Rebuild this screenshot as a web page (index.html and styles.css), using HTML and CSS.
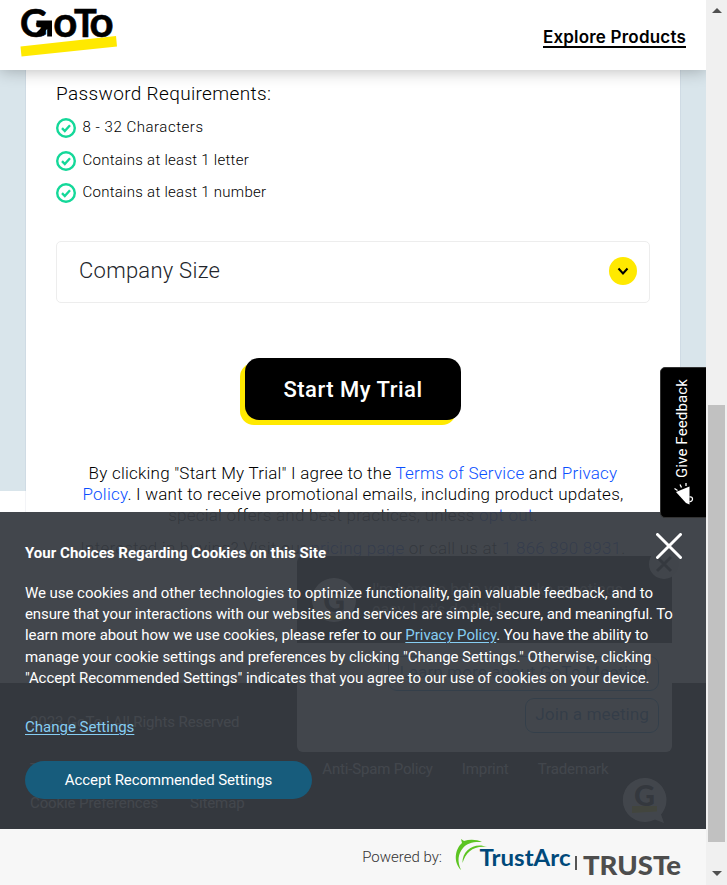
FILE: index.html
```html
<!DOCTYPE html>
<html lang="en">
<head>
<meta charset="utf-8">
<title>GoTo - Start My Trial</title>
<link rel="stylesheet" href="styles.css">
</head>
<body>
<div class="window">
  <div class="page">
    <header class="header">
      <svg class="logo" width="100" height="52" viewBox="0 0 100 52" role="img" aria-label="GoTo">
        <path d="M0.5 41.5 96 31 97 41.5 1.5 51.500z" fill="#ffe900"/>
        <text class="logo-text"><tspan x="0" y="31.500" font-size="38" textLength="32">G</tspan><tspan x="33.300" y="31.500" font-size="42">o</tspan><tspan x="54" y="31.500" font-size="38">T</tspan><tspan x="69.500" y="31.500" font-size="42">o</tspan></text>
        <path d="M16.500 15.500h15.500v16h-4.800v-7.500l-7.500 7-3.200-3.500 7.200-7H16.500z" fill="#000"/>
      </svg>
      <a class="explore">Explore Products</a>
    </header>

    <main class="stage">
      <section class="card">
        <h2 class="pw-title">Password Requirements:</h2>
        <ul class="rules">
          <li><svg width="20" height="20" viewBox="0 0 20 20"><circle cx="10" cy="10" r="8.800"/><path d="M6 10.200 8.800 13 14 7.300"/></svg><span class="rule-a">8 - 32 Characters</span></li>
          <li><svg width="20" height="20" viewBox="0 0 20 20"><circle cx="10" cy="10" r="8.800"/><path d="M6 10.200 8.800 13 14 7.300"/></svg><span>Contains at least 1 letter</span></li>
          <li><svg width="20" height="20" viewBox="0 0 20 20"><circle cx="10" cy="10" r="8.800"/><path d="M6 10.200 8.800 13 14 7.300"/></svg><span>Contains at least 1 number</span></li>
        </ul>
        <div class="select">
          <span>Company Size</span>
          <svg width="28" height="28" viewBox="0 0 28 28"><circle cx="14" cy="14" r="14" fill="#ffe900"/><path d="M9.500 11.500 14 16.500 18.500 11.500" fill="none" stroke="#000" stroke-width="2"/></svg>
        </div>
        <button class="trial">Start My Trial</button>
        <p class="terms">By clicking "Start My Trial" I agree to the <a>Terms of Service</a> and <a>Privacy<br>Policy</a>. I want to receive promotional emails, including product updates,<br>special offers and best practices, unless <a>opt out</a>.</p>
        <p class="terms buy">Interested in buying? Visit our <a>pricing page</a> or call us at <a>1 866 890 8931</a>.</p>
      </section>
    </main>

    <footer class="footer">
      <p>2023 GoTo | All Rights Reserved</p>
      <nav class="links"><a>Terms and Conditions</a><a class="anti">Anti-Spam Policy</a><a>Imprint</a><a>Trademark</a></nav>
      <nav class="links second"><a>Cookie Preferences</a><a>Sitemap</a></nav>
    </footer>

    <aside class="chat">
      <div class="chat-head">
        <span class="avatar">G</span>
        <p>I'm here to help you make meetings<br>easy. Let's do this!</p>
      </div>
      <div class="chat-body">
        <span class="chip wide">Learn more about GoTo Meeting</span>
        <span class="chip">Join a meeting</span>
      </div>
      <svg class="chat-close" width="30" height="30" viewBox="0 0 30 30"><circle cx="15" cy="15" r="15" fill="#e8e8e8"/><path d="M8 8 22 22M22 8 8 22" stroke="#222" stroke-width="3"/></svg>
    </aside>
    <svg class="bubble" width="44" height="46" viewBox="0 0 44 46"><path d="M22 0a22 22 0 1 0 10 41.500L41 45 38 36.500A22 22 0 0 0 22 0z" fill="#fff"/><path d="M9 28h25v5.500L9 35z" fill="#ffe900"/><text x="11" y="28" class="bubble-g">G</text></svg>

    <section class="banner">
      <div class="notice">
        <h3>Your Choices Regarding Cookies on this Site</h3>
        <p>We use cookies and other technologies to optimize functionality, gain valuable feedback, and to<br><span class="l2">ensure that your interactions with our websites and services are simple, secure, and meaningful. To</span><br>learn more about how we use cookies, please refer to our <a>Privacy Policy</a>. You have the ability to<br>manage your cookie settings and preferences by clicking "Change Settings." Otherwise, clicking<br>"Accept Recommended Settings" indicates that you agree to our use of cookies on your device.</p>
        <a class="change">Change Settings</a>
        <button class="accept">Accept Recommended Settings</button>
        <svg class="dismiss" width="26" height="26" viewBox="0 0 26 26"><path d="M1.500 1.500 24.500 24.500M24.500 1.500 1.500 24.500" stroke="#fff" stroke-width="3" stroke-linecap="round"/></svg>
      </div>
      <div class="powered">
        <span>Powered by:</span>
        <svg width="228" height="44" viewBox="0 0 228 44" role="img" aria-label="TrustArc TRUSTe">
          <path d="M7 2 10 4C16 2 23 2.500 28 5 19 4.500 13 6 9 11 4 17 3 24 7 33-1 25 1 12 8 6z" fill="#5cc422"/>
          <path d="M33 10C22 5 8 12 8.500 26 12 15 19 8.500 33 10z" fill="#5cc422"/>
          <text x="25.500" y="29" class="tarc" textLength="91" lengthAdjust="spacingAndGlyphs">TrustArc</text>
          <path d="M122 19v14" stroke="#555" stroke-width="2"/>
          <text x="129" y="37.500" class="truste" textLength="98" lengthAdjust="spacingAndGlyphs">TRUSTe</text>
        </svg>
      </div>
    </section>

    <div class="feedback">
      <span>Give Feedback</span>
      <svg width="20" height="22" viewBox="0 0 20 22"><path d="M2 9 15.500 3.500V21.500L12 20z" fill="#fff"/><path d="M15.500 14c4-1 4 5 0 4.500M.5 5.500l3 2M6 1.500l1.500 3M12 0v3" fill="none" stroke="#fff" stroke-width="1.300"/></svg>
    </div>
  </div>
  <div class="scrollbar"><i class="up"></i><i class="thumb"></i><i class="down"></i></div>
</div>
</body>
</html>
```
FILE: styles.css
```css
* { box-sizing: border-box; }
body { margin: 0; font-family: Roboto, "Liberation Sans", sans-serif; font-weight: 300; color: #000; }
h2, h3, p, ul { margin: 0; padding: 0; }
button { border: 0; font-family: inherit; }

.window { display: flex; width: 727px; height: 885px; overflow: hidden; }
.page { position: relative; width: 706px; height: 885px; overflow: hidden; background: #fff; }

.header { position: relative; height: 70px; padding: 5px 20px 0 20px; display: flex; justify-content: space-between; background: #fff; box-shadow: 0 0 16px rgba(0, 0, 0, .3); z-index: 1; }
.logo { overflow: visible; }
.logo-text { font-family: Lato, sans-serif; font-weight: 700; stroke: #000; stroke-width: .6px; }
.explore { margin-top: 22px; height: 21px; font: 600 17px/20px Inter, sans-serif; letter-spacing: .2px; border-bottom: 2px solid #000; white-space: nowrap; }

.stage { height: 613px; padding: 0 26px; background: linear-gradient(#d9e5eb 421px, #fff 421px); }
.card { height: 100%; padding: 12px 30px 0; background: #fff; box-shadow: 0 0 1px rgba(80, 100, 140, .4); }
.pw-title { font-size: 19px; line-height: 24px; font-weight: 300; letter-spacing: .35px; }
.rules { list-style: none; margin-top: 5px; display: flex; flex-direction: column; }
.rules li { display: flex; align-items: center; gap: 6.5px; height: 32.5px; font-size: 15px; letter-spacing: .27px; }
.rules li:first-child { height: 33px; }
.rules li:last-child { height: 32px; }
.rules svg { fill: none; stroke: #14d899; stroke-width: 2.4; margin-top: 1px; }
.rules li span { margin-top: -1px; }
.rules li .rule-a { letter-spacing: .53px; }
.select { margin-top: 32.5px; height: 62px; padding: 0 12px 0 22px; border: 1px solid #ededed; border-radius: 5px; display: flex; align-items: center; justify-content: space-between; font-size: 22px; letter-spacing: .26px; color: #22252b; }
.select span { margin-top: -4px; }
.select svg { margin-top: -2px; }
.trial { display: block; width: 216px; height: 62px; margin: 55px 0 0 189px; border-radius: 14px; background: #000; box-shadow: -5px 5px 0 #ffe900; color: #fff; font-size: 22px; font-weight: 500; letter-spacing: .5px; }
.terms { margin-top: 43px; font-size: 17px; line-height: 21.2px; letter-spacing: .23px; text-align: center; white-space: nowrap; }
.terms a { color: #0a50ff; }
.terms.buy { margin-top: 11px; }

.footer { height: 202px; padding: 29px 30px; background: #000; color: #fff; font-size: 15px; font-weight: 400; line-height: 20px; letter-spacing: -.1px; }
.links { display: flex; gap: 29px; margin-top: 27px; white-space: nowrap; }
.links .anti { margin-left: 119px; letter-spacing: -.18px; }
.links.second { margin-top: 14px; gap: 32px; }

.chat { position: absolute; left: 297px; top: 556px; width: 375px; height: 196px; border-radius: 6px; background: #fff; }
.chat-head { height: 87px; padding: 0 15px; display: flex; align-items: center; gap: 16px; background: #000; color: #fff; font-size: 16px; line-height: 20px; font-weight: 400; border-radius: 6px 6px 0 0; }
.chat-head p { white-space: nowrap; color: #aaa; }
.avatar { width: 44px; height: 44px; border-radius: 50%; background: #fff; color: #000; font: 900 30px/44px Lato, sans-serif; text-align: center; text-decoration: underline 5px #ffe900; }
.chat-body { padding: 13px 13px 0; display: flex; flex-direction: column; align-items: flex-end; gap: 7px; }
.chip { height: 35px; padding: 0 9px; border: 1px solid #0a84d8; border-radius: 9px; color: #0a64b8; font-size: 17.3px; line-height: 31px; white-space: nowrap; font-weight: 400; }
.chip.wide { width: 271px; text-align: center; }
.chat-close { position: absolute; left: 352px; top: -7px; }
.bubble { position: absolute; left: 623px; top: 778px; overflow: visible; }
.bubble-g { font: 900 29px Lato, sans-serif; }

.banner { position: absolute; left: 0; bottom: 0; width: 706px; height: 373px; display: flex; flex-direction: column; font-weight: 400; font-size: 15px; }
.notice { position: relative; height: 317px; padding: 31px 25px 0; background: rgba(55, 59, 66, .945); color: #fff; white-space: nowrap; }
.notice h3 { font-size: 15px; line-height: 20px; font-weight: 700; letter-spacing: .03px; }
.notice p { margin-top: 20px; line-height: 21.2px; letter-spacing: -.05px; }
.notice .l2 { letter-spacing: -.1px; }
.notice a { color: #86cdf2; text-decoration: underline; text-underline-offset: 2px; }
.notice .change { display: block; width: max-content; margin-top: 28px; line-height: 20px; }
.accept { display: block; width: 287px; height: 38px; margin-top: 24px; border-radius: 19px; background: #175c7c; color: #fff; font-size: 15px; letter-spacing: -.1px; }
.dismiss { position: absolute; left: 655.5px; top: 20.5px; }
.powered { height: 56px; padding: 0 24px 0 0; display: flex; justify-content: flex-end; gap: 12px; background: #f7f7f7; color: #333; line-height: 56px; font-weight: 300; }
.powered svg { margin-top: 8px; overflow: visible; }
.tarc { font: 700 23px Lato, sans-serif; fill: #00497a; }
.truste { font: 900 26px Lato, sans-serif; fill: #4d4d4d; }

.feedback { position: absolute; left: 660px; top: 367px; width: 47px; height: 151px; padding: 10px 0 0 10px; border: 1px solid #333; border-radius: 5px 0 0 5px; background: #000; color: #fff; display: flex; flex-direction: column; gap: 5px; font-size: 15px; font-weight: 400; letter-spacing: .13px; }
.feedback span { writing-mode: vertical-rl; transform: rotate(180deg); width: 22px; height: 100px; line-height: 22px; white-space: nowrap; }
.feedback svg { margin-left: 3px; }

.scrollbar { width: 21px; padding: 8px 2px 8px; display: flex; flex-direction: column; align-items: center; background: #f0f0f0; }
.up { border: 5px solid transparent; border-top: 0; border-bottom-color: #505050; }
.thumb { width: 17px; height: 437px; margin-top: 392px; background: #c1c1c1; }
.down { margin-top: 29px; border: 5px solid transparent; border-bottom: 0; border-top-color: #505050; }
```
